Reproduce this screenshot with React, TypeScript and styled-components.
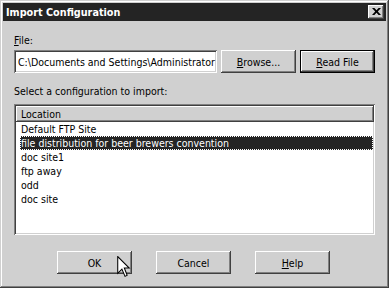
import React from "react";
import styled, { createGlobalStyle } from "styled-components";

const FACE = "#d0d0d0";
const DARK = "#404040";
const SHADOW = "#808080";
const SEL = "#242424";

const Global = createGlobalStyle`
  html, body { margin: 0; padding: 0; background: ${FACE}; }
  * { box-sizing: border-box; }
`;

const Window = styled.div`
  position: relative;
  width: 389px;
  height: 288px;
  padding: 3px;
  background: ${FACE};
  box-shadow: inset -1px -1px ${DARK}, inset 1px 1px ${FACE},
    inset -2px -2px ${SHADOW}, inset 2px 2px #ffffff;
  display: flex;
  flex-direction: column;
  font-family: "DejaVu Sans Condensed", "Liberation Sans", Arial, sans-serif;
  font-stretch: condensed;
  font-size: 10.5px;
  color: #000;
`;

const TitleBar = styled.div`
  height: 18px;
  background: ${SEL};
  display: flex;
  align-items: center;
  justify-content: space-between;
  padding: 0 2px 0 3px;
`;

const Title = styled.span`
  color: #fff;
  font-weight: bold;
  font-size: 10.75px;
`;

const CloseButton = styled.div`
  width: 16px;
  height: 14px;
  background: ${FACE};
  box-shadow: inset -1px -1px ${DARK}, inset 1px 1px #ffffff,
    inset -2px -2px ${SHADOW};
  display: flex;
  align-items: center;
  justify-content: center;
  padding-bottom: 1px;
`;

const Content = styled.div`
  display: flex;
  flex-direction: column;
  padding: 0 11px;
`;

const Label = styled.div<{ $top: number }>`
  line-height: 13px;
  margin-top: ${(p) => p.$top}px;
`;

const FileRow = styled.div`
  display: flex;
  gap: 4px;
  margin-top: 3px;
`;

const TextField = styled.div`
  width: 203px;
  height: 23px;
  background: #fff;
  box-shadow: inset 1px 1px ${SHADOW}, inset -1px -1px #ffffff,
    inset 2px 2px ${DARK}, inset -2px -2px ${FACE};
  padding: 0 2px 0 4px;
  display: flex;
  align-items: center;
  overflow: hidden;
  white-space: nowrap;
`;

const Button = styled.div<{ $default?: boolean }>`
  width: 75px;
  height: 23px;
  background: ${FACE};
  display: flex;
  align-items: center;
  justify-content: center;
  box-shadow: ${(p) =>
    p.$default
      ? `inset 0 0 0 1px #000, inset -2px -2px ${DARK}, inset 2px 2px #ffffff, inset -3px -3px ${SHADOW}`
      : `inset -1px -1px ${DARK}, inset 1px 1px #ffffff, inset -2px -2px ${SHADOW}`};
`;

const List = styled.div`
  margin-top: 6px;
  width: 361px;
  height: 131px;
  background: #fff;
  padding: 2px;
  box-shadow: inset 1px 1px ${SHADOW}, inset -1px -1px #ffffff,
    inset 2px 2px ${DARK}, inset -2px -2px ${FACE};
  display: flex;
  flex-direction: column;
`;

const Header = styled.div`
  height: 16px;
  background: ${FACE};
  padding-left: 5px;
  display: flex;
  align-items: center;
  margin-right: -1px;
  box-shadow: inset -1px -1px ${DARK}, inset 1px 1px #ffffff,
    inset -2px -2px ${SHADOW};
`;

const Row = styled.div<{ $selected?: boolean }>`
  height: 14px;
  margin-left: 4px;
  padding-left: 1px;
  display: flex;
  align-items: center;
  white-space: nowrap;
  background: ${(p) => (p.$selected ? SEL : "transparent")};
  color: ${(p) => (p.$selected ? "#fff" : "#000")};
  outline: ${(p) => (p.$selected ? "1px dotted #ffffff" : "none")};
  outline-offset: -1px;
`;

const ButtonRow = styled.div`
  display: flex;
  justify-content: center;
  gap: 24px;
  margin-top: 16px;
  padding-right: 2px;
`;

const Cursor = styled.svg`
  position: absolute;
  left: 117px;
  top: 256px;
`;

const U = styled.span`
  text-decoration: underline;
`;

const items = [
  "Default FTP Site",
  "file distribution for beer brewers convention",
  "doc site1",
  "ftp away",
  "odd",
  "doc site",
];

export default function App() {
  return (
    <>
      <Global />
      <Window>
        <TitleBar>
          <Title>Import Configuration</Title>
          <CloseButton>
            <svg width="9" height="7" viewBox="0 0 9 7">
              <path d="M0 0h2.4l2.1 2.3L6.6 0H9L5.8 3.5 9 7H6.6L4.5 4.7 2.4 7H0l3.2-3.5z" fill="#000" />
            </svg>
          </CloseButton>
        </TitleBar>
        <Content>
          <Label $top={13}>
            <U>F</U>ile:
          </Label>
          <FileRow>
            <TextField>C:\Documents and Settings\Administrator</TextField>
            <Button>
              <span>
                <U>B</U>rowse...
              </span>
            </Button>
            <Button $default>
              <span>
                <U>R</U>ead File
              </span>
            </Button>
          </FileRow>
          <Label $top={12}>Select a configuration to import:</Label>
          <List>
            <Header>Location</Header>
            {items.map((it, i) => (
              <Row key={it} $selected={i === 1}>
                {it}
              </Row>
            ))}
          </List>
          <ButtonRow>
            <Button>OK</Button>
            <Button>Cancel</Button>
            <Button>
              <span>
                <U>H</U>elp
              </span>
            </Button>
          </ButtonRow>
        </Content>
        <Cursor width="14" height="23" viewBox="0 0 13 22">
          <path
            d="M0.5 0.5 L0.5 16.5 L4.5 12.5 L7.5 19.5 L9.5 18.5 L6.8 11.5 L11.5 11.5 Z"
            fill="#fff"
            stroke="#000"
            strokeWidth="1"
          />
        </Cursor>
      </Window>
    </>
  );
}
